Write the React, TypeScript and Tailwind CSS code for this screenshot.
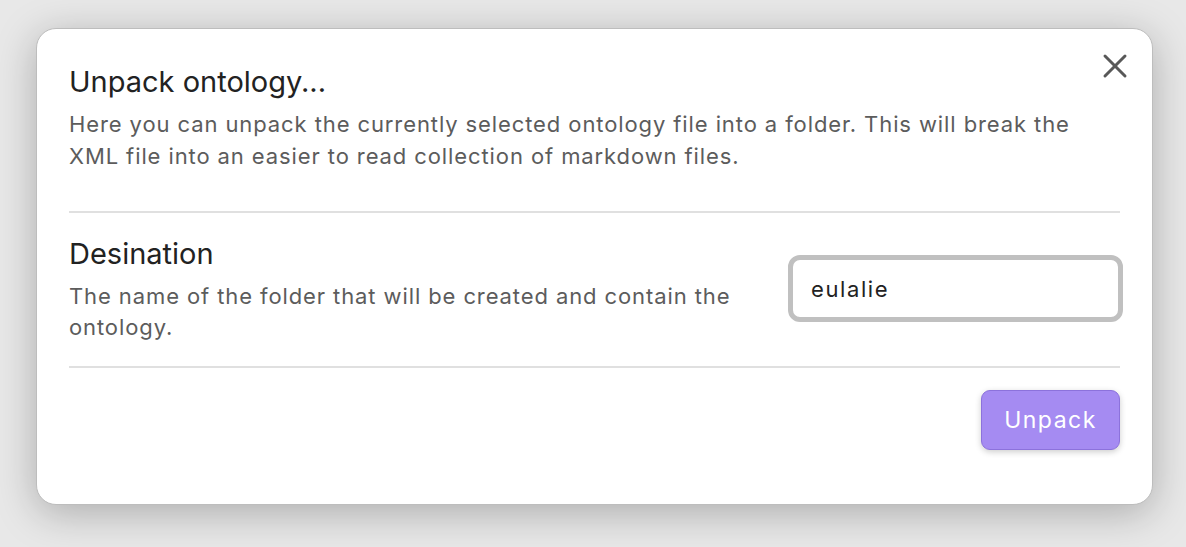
export default function App() {
  return (
    <div
      className="w-[1186px] h-[547px] overflow-hidden bg-[#e8e8e8] pt-[28px] pl-[36px]"
      style={{ fontFamily: "Inter, 'Noto Sans', sans-serif" }}
    >
      <div className="relative w-[1117px] h-[477px] rounded-[20px] border border-[#bdbdbd] bg-white shadow-[0_8px_40px_rgba(0,0,0,0.26)] px-[32px] pt-[35px]">
        {/* close */}
        <button className="absolute right-[24px] top-[24px] w-[26px] h-[26px] text-[#585858]">
          <svg width="26" height="26" viewBox="0 0 26 26" fill="none" stroke="currentColor" strokeWidth="3" strokeLinecap="round">
            <path d="M3 3 L23 23" />
            <path d="M23 3 L3 23" />
          </svg>
        </button>

        {/* Header */}
        <h1 className="text-[29px] leading-[36px] text-[#222]">Unpack ontology...</h1>
        <p className="mt-[8px] text-[22px] leading-[32px] tracking-[0.9px] text-[#5c5c5c]">
          Here you can unpack the currently selected ontology file into a folder. This will break the XML file into an easier to read collection of markdown files.
        </p>

        <div className="mt-[39px] border-t-2 border-[#e0e0e0]" />

        {/* Setting row */}
        <div className="flex items-start justify-between pt-[23px] pb-[23px]">
          <div className="w-[680px]">
            <div className="text-[29px] leading-[36px] text-[#222]">Desination</div>
            <div className="mt-[9px] text-[22px] leading-[31px] tracking-[0.9px] text-[#5c5c5c]">
              The name of the folder that will be created and contain the ontology.
            </div>
          </div>
          <input
            defaultValue="eulalie"
            className="mt-[19px] mr-[-3px] w-[335px] h-[67px] rounded-[12px] border-[5px] border-[#c0c0c0] px-[18px] text-[22px] tracking-[1.6px] text-[#222] outline-none"
          />
        </div>

        <div className="border-t-2 border-[#e0e0e0]" />

        {/* Footer */}
        <div className="flex justify-end pt-[22px]">
          <button className="w-[139px] h-[60px] rounded-[9px] border border-[#8c72dc] bg-[#a58bf2] text-white text-[23px] tracking-[1.5px] shadow-[0_2px_6px_rgba(0,0,0,0.2)]">
            Unpack
          </button>
        </div>
      </div>
    </div>
  );
}
